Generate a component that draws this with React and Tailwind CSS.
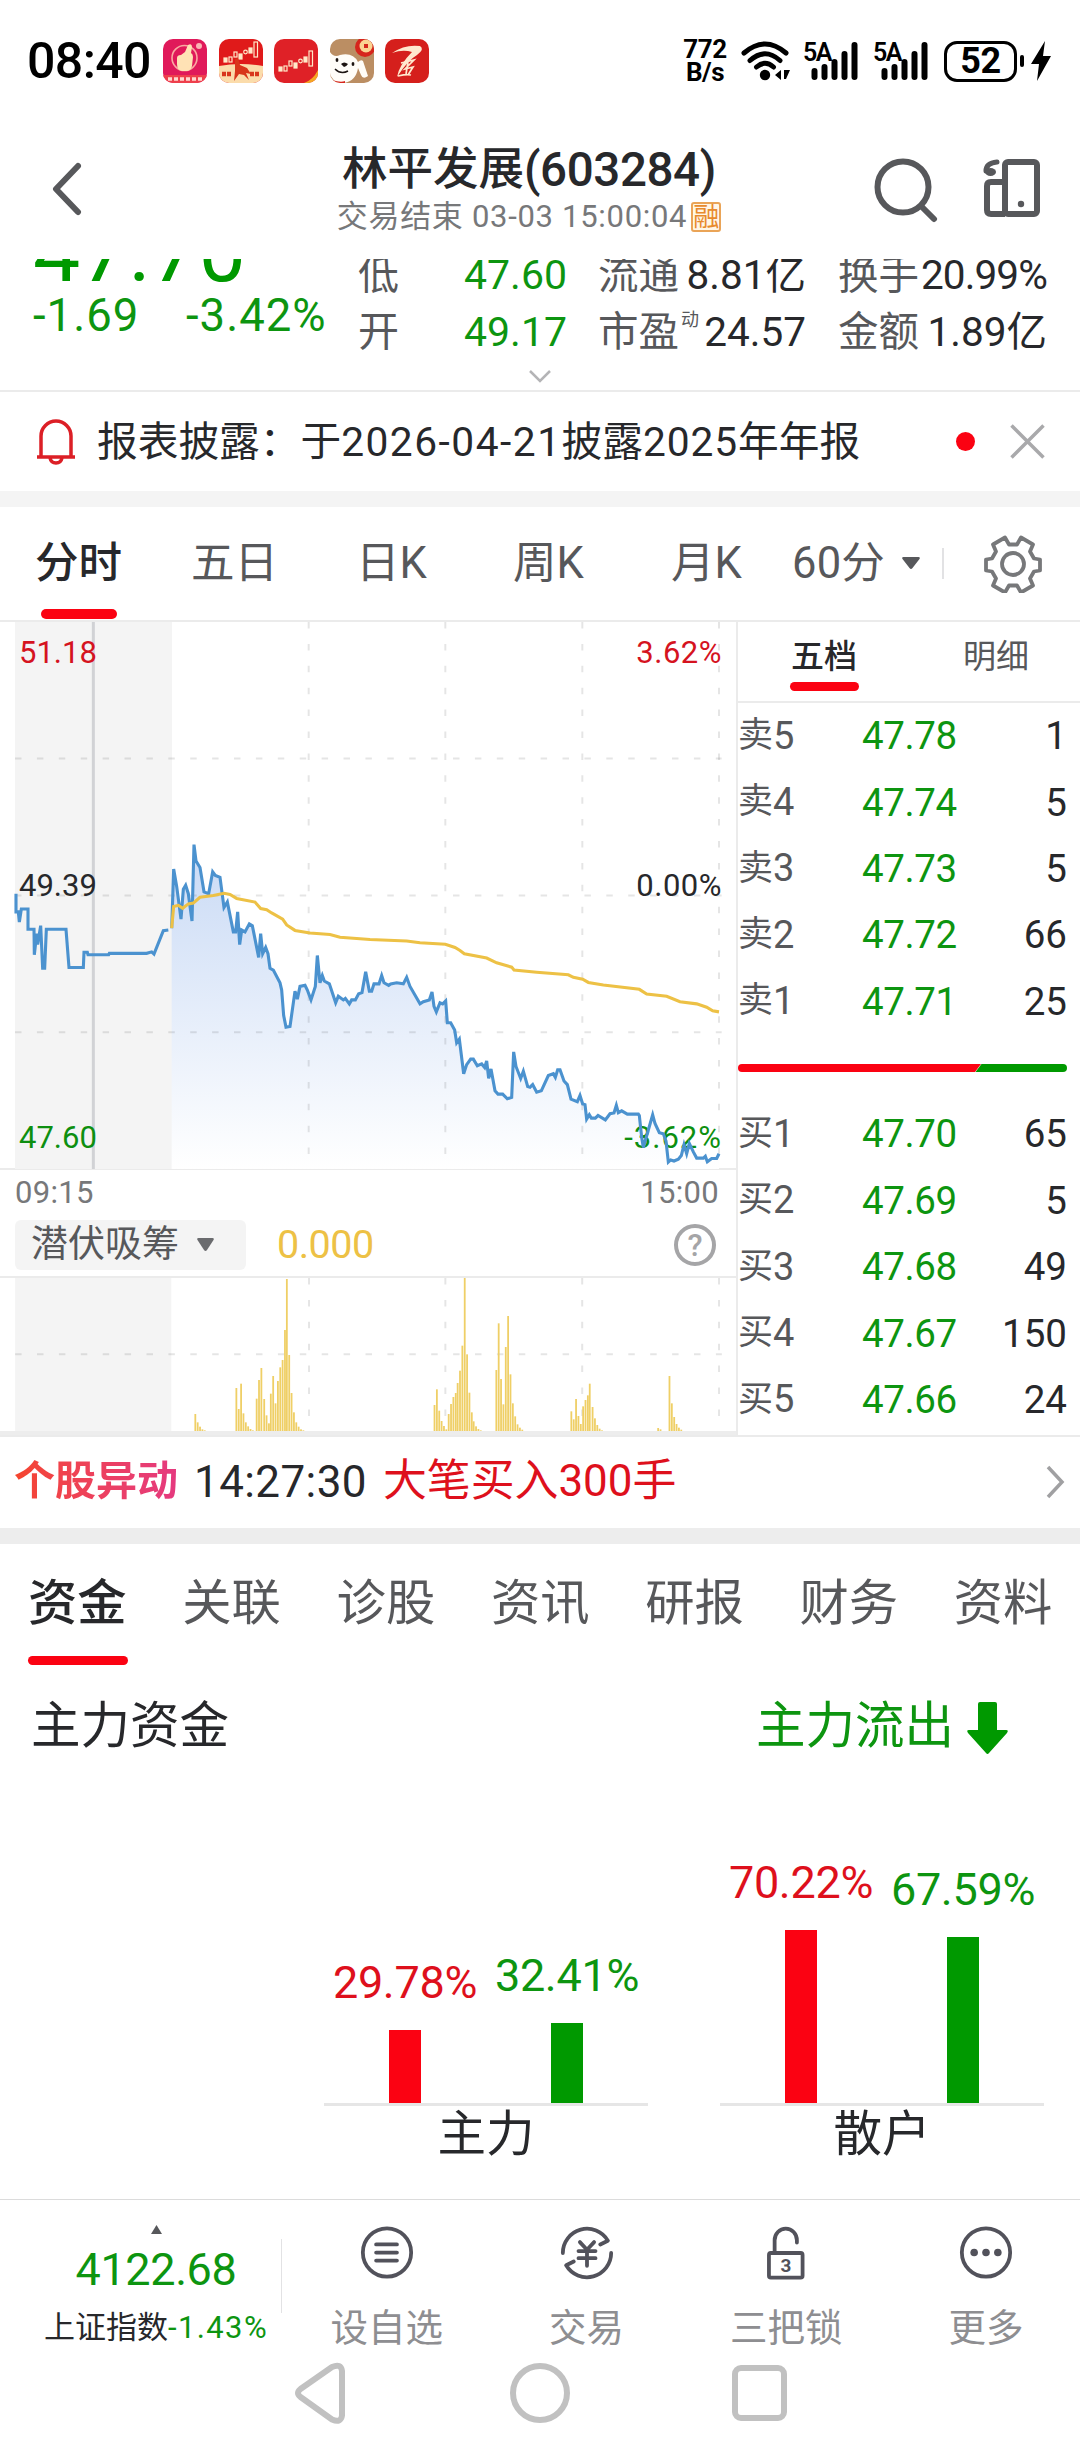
const quoteRows = [
  {
    low: { label: "低", value: "47.60" },
    mid: { label: "流通", value: "8.81亿" },
    right: { label: "换手", value: "20.99%", tight: true },
  },
  {
    low: { label: "开", value: "49.17" },
    mid: { label: "市盈", sup: "动", value: "24.57" },
    right: { label: "金额", value: "1.89亿" },
  },
];

const sellOrders = [
  ["卖5", "47.78", "1"],
  ["卖4", "47.74", "5"],
  ["卖3", "47.73", "5"],
  ["卖2", "47.72", "66"],
  ["卖1", "47.71", "25"],
];

const buyOrders = [
  ["买1", "47.70", "65"],
  ["买2", "47.69", "5"],
  ["买3", "47.68", "49"],
  ["买4", "47.67", "150"],
  ["买5", "47.66", "24"],
];

const infoTabs = ["资金", "关联", "诊股", "资讯", "研报", "财务", "资料"];

const fundGroups = [
  { name: "主力", inflow: 29.78, outflow: 32.41 },
  { name: "散户", inflow: 70.22, outflow: 67.59 },
];

// call auction segment, before 09:30
const auctionLine =
  "48,780 48,830 55,830 58,858 64,822 84,822 84,878 102,878 103,948 110,890 113,920 122,868 128,985 134,985 139,878 198,878 207,983 250,983 252,941 262,941 264,948 326,948 328,944 440,944 455,940 462,946 490,882 505,880";

const priceLine =
  "515,875 521,712 530,760 543,850 550,768 557,757 565,780 576,855 582,645 588,690 600,708 612,775 626,780 638,720 646,730 660,735 672,818 682,803 700,885 707,885 713,830 719,920 725,880 735,885 748,863 757,868 776,955 782,890 788,945 797,928 804,945 810,985 820,990 840,1025 845,1045 851,1115 858,1147 870,1145 885,1048 892,1070 900,1035 915,1032 922,1045 933,1072 946,1035 952,950 960,1025 967,1005 973,1020 988,1028 1007,1080 1015,1062 1030,1072 1036,1068 1048,1083 1055,1072 1066,1072 1076,1055 1086,1052 1097,995 1108,1048 " +
  "1115,1048 1122,1028 1137,1028 1145,1005 1152,1025 1166,1032 1172,1028 1190,1025 1210,1028 1220,1010 1230,1035 1260,1083 1270,1077 1288,1072 1296,1050 1302,1090 1309,1105 1320,1080 1328,1083 1337,1075 1342,1135 1352,1135 1364,1155 1370,1190 1378,1180 1391,1275 1400,1250 1412,1235 1420,1235 1432,1253 1445,1248 1454,1258 1460,1240 1466,1288 1473,1262 1485,1322 1494,1331 1508,1331 1522,1344 1535,1340 1541,1215 1548,1255 1562,1288 1570,1268 1583,1310 1590,1312 1598,1305 1610,1326 1624,1322 1645,1280 1660,1275 1666,1285 1673,1264 1680,1264 1692,1295 1702,1305 1713,1345 1732,1352 1740,1335 1748,1358 1755,1360 1760,1400 1768,1388 1774,1397 1786,1397 1794,1390 1816,1402 1830,1385 1842,1383 1849,1362 1855,1382 1865,1377 1882,1386 1915,1386 1918,1390 1925,1450 1930,1478 1958,1388 1965,1412 1978,1437 1990,1440 1998,1460 2005,1518 2012,1512 2022,1515 2035,1510 2044,1500 2052,1470 2060,1495 2068,1467 2080,1490 2090,1507 2110,1507 2116,1502 2122,1517 2135,1508 2150,1508 2157,1495";

const averageLine =
  "515,875 521,815 535,812 548,820 565,808 580,806 600,790 640,785 672,779 690,782 710,793 765,803 782,821 800,824 815,833 848,850 860,866 885,881 930,888 990,892 1020,900 1110,906 1220,910 1260,915 1336,919 1365,928 1380,936 1393,945 1460,957 1490,970 1535,982 1542,990 1610,996 1705,1003 1720,1010 1748,1015 1765,1024 1810,1031 1918,1043 1940,1056 2000,1062 2040,1077 2090,1083 2120,1092 2138,1102 2157,1105";

// [x, top] pairs, base line is 813
const volumeBars = [
  [414, 762], [419, 787], [424, 800], [429, 808], [434, 811],
  [501, 684], [506, 747], [511, 671], [516, 760], [521, 787], [526, 799], [531, 807], [536, 811],
  [544, 716], [549, 660], [554, 624], [560, 717], [565, 766], [570, 790], [574, 701], [579, 648], [584, 730],
  [589, 663], [594, 622], [599, 600], [604, 510], [608, 357], [613, 585], [618, 699], [623, 757], [628, 787],
  [633, 800], [638, 808], [643, 811],
  [921, 735], [926, 688], [931, 752], [936, 783], [941, 798], [946, 808], [951, 762], [956, 732], [961, 711],
  [966, 699], [970, 669], [975, 632], [980, 557], [985, 354], [990, 583], [995, 698], [1000, 757], [1004, 784],
  [1009, 799], [1014, 807], [1019, 811],
  [1052, 630], [1057, 490], [1062, 657], [1067, 733], [1072, 561], [1077, 468], [1082, 643], [1087, 730],
  [1092, 769], [1097, 793], [1102, 803], [1107, 809],
  [1211, 754], [1216, 778], [1221, 717], [1226, 768], [1231, 792], [1236, 739], [1241, 720], [1246, 706],
  [1250, 671], [1256, 741], [1261, 775], [1266, 795], [1271, 806], [1276, 811],
  [1395, 804], [1400, 808], [1419, 648], [1424, 730], [1429, 771], [1434, 792], [1439, 803], [1444, 809],
];

const candles = (
  <g stroke="#ffe9c9" strokeWidth="1.2" fill="none">
    <rect x="5" y="28" width="3" height="4" fill="#ffe9c9" />
    <rect x="10" y="27" width="3" height="5" />
    <rect x="15" y="22" width="3" height="5" />
    <rect x="20" y="24" width="3" height="5" fill="#ffe9c9" />
    <circle cx="26.5" cy="22" r="1.8" />
    <rect x="30" y="18" width="3" height="5" fill="#ffe9c9" />
    <rect x="35" y="12" width="3.5" height="15" />
  </g>
);

const AppIcons = () => (
  <div className="flex gap-[11.5px]">
    <svg className="size-11 rounded-[10px]" viewBox="0 0 44 44">
      <rect width="44" height="44" fill="#e0195a" />
      <path d="M0 36h44v8H0z" fill="#ee3f4c" />
      <circle cx="21.5" cy="19" r="12.5" fill="none" stroke="#f9a9a0" strokeWidth="1.6" />
      <path d="M14 19q0-3 4-3l4-3 3-7q4-2 4 2l-1 6q2 1 2 4l-1 9q-1 5-6 5h-4q-5-1-5-7z" fill="#ffe2b5" />
      <circle cx="36" cy="7" r="3" fill="#f9b4b4" />
      <path d="M5 40h34" stroke="#ffd9cf" strokeWidth="3.5" strokeDasharray="4 2" />
    </svg>
    <svg className="size-11 rounded-[10px]" viewBox="0 0 44 44">
      <rect width="44" height="44" fill="#e01a1a" />
      <path d="M0 27q22-4 44 0v17H0z" fill="#fbdcab" />
      <g transform="translate(0 -9)">{candles}</g>
      <path d="M16 20l3-1 2 7 7 3 4 6-5-1 3 7-5-5-5-1-5 7 1-10z" fill="#d8361c" />
      <path d="M3 35h10M31 35h10" stroke="#d8361c" strokeWidth="4.5" strokeDasharray="4 1" />
    </svg>
    <svg className="size-11 rounded-[10px]" viewBox="0 0 44 44">
      <rect width="44" height="44" fill="#df2127" />
      {candles}
      <path d="M44 31v13H30q9-3 14-13z" fill="#f5a623" />
    </svg>
    <svg className="size-11 rounded-[10px]" viewBox="0 0 44 44">
      <rect width="44" height="44" fill="#bb8e63" />
      <circle cx="35" cy="8" r="10" fill="#d6261d" />
      <circle cx="36" cy="7" r="6.5" fill="#fbd493" />
      <path d="M34 5h4v4h-4z" fill="#d6261d" />
      <path d="M0 13q4 6 10 3 13-3 18 7 3-3 5-1l5 15q-5 4-7-1l-3-7q-2 13-14 15H6L0 36z" fill="#fffdf8" />
      <path d="M11 25q3-3 7 0-2 3-4 3z" fill="#1d1512" />
      <ellipse cx="7" cy="21" rx="1.4" ry="2" fill="#1d1512" />
      <ellipse cx="23" cy="25" rx="1.4" ry="2" fill="#1d1512" />
      <path d="M5 30q6 6 13 2" stroke="#1d1512" strokeWidth="1.5" fill="none" />
      <path d="M2 41q9 3 13 1v2H2z" fill="#d6261d" />
    </svg>
    <svg className="size-11 rounded-[10px]" viewBox="0 0 44 44">
      <rect width="44" height="44" fill="#d51f1c" />
      <path d="M7 14Q20 5 35 7q5 3-3 9-9 5-20 22 2-12 15-25-9-3-20 1z" fill="#ffe9cf" />
      <path d="M16 24l13-3-9 9 8-2-5 8M13 37q9-2 13-1M23 23l-2 12" stroke="#ffe9cf" strokeWidth="1.7" fill="none" />
    </svg>
  </div>
);

const Signal = () => (
  <div className="relative h-[38px] w-[56px]">
    <span className="absolute -top-[3px] left-0 text-[25px] leading-[28px] font-semibold tracking-[-1.5px]">5A</span>
    <svg className="absolute right-0 bottom-0" width="48" height="38" viewBox="0 0 48 38">
      <path d="M3.5 29v6M13.5 25v10M23.5 20v15M33.5 12v23M43.5 3v32" stroke="#000" strokeWidth="6" strokeLinecap="round" />
    </svg>
  </div>
);

const StatusBar = () => (
  <div className="flex h-[122px] items-center pr-[29px] pl-[27px] text-black">
    <div className="w-[136px] text-[50px] leading-none font-medium tracking-[-0.6px]">08:40</div>
    <AppIcons />
    <div className="flex-1" />
    <div className="w-[46px] text-center text-[26px] leading-[23px] font-bold tracking-[-0.5px]">
      <div>772</div>
      <div>B/s</div>
    </div>
    <svg className="ml-[13px]" width="50" height="40" viewBox="0 0 50 40">
      <g fill="none" stroke="#000" strokeWidth="5" strokeLinecap="round">
        <path d="M3 12Q24-6 45 12" />
        <path d="M9 19.5Q24 6 39 19.5" />
        <path d="M15.5 26Q24 18.500 32.5 26" />
      </g>
      <circle cx="24" cy="34" r="5.2" />
      <path d="M40 29v10l-6-5zM43 29l6 0-4 9h-2z" />
    </svg>
    <div className="ml-[12px] flex gap-[14px]">
      <Signal />
      <Signal />
    </div>
    <div className="ml-[15px] flex h-[41px] w-[73px] items-center justify-center rounded-[13px] border-[3px] border-black text-[36px] leading-none font-bold tracking-[-0.5px]">
      52
    </div>
    <div className="ml-[3px] h-[12px] w-[4px] rounded-full bg-black" />
    <svg className="ml-[7px]" width="20" height="40" viewBox="0 0 20 40">
      <path d="M14 0L0 23h8l-2 17L20 15h-8z" />
    </svg>
  </div>
);

const Header = () => (
  <div className="flex h-[137px] items-start justify-between pr-[39px] pl-[52px]">
    <svg className="mt-[40px]" width="30" height="54" viewBox="0 0 30 54">
      <path d="M26 4L4 27l22 23" fill="none" stroke="#57585b" strokeWidth="6" strokeLinecap="round" strokeLinejoin="round" />
    </svg>
    <div className="mt-[21px] ml-[103px] flex flex-col items-center">
      <div className="flex h-[54px] items-center font-medium whitespace-nowrap text-[#27282b]">
        <span className="text-[45.5px] leading-[54px]">林平发展</span>
        <span className="text-[47.5px] leading-[54px] tracking-[-0.4px]">(603284)</span>
      </div>
      <div className="mt-[2px] flex h-[36px] items-center gap-[4px] whitespace-nowrap text-[#77787a]">
        <span className="text-[31px] leading-[36px] tracking-[0.7px]">交易结束 03-03 15:00:04</span>
        <span className="flex size-[30px] items-center justify-center rounded-[3px] border-2 border-[#eaa457] bg-[#fff6e6] text-[26px] leading-none text-[#e88a2c]">
          融
        </span>
      </div>
    </div>
    <div className="flex items-start gap-[44px] pt-[35px]">
      <svg width="66" height="66" viewBox="0 0 66 66" fill="none" stroke="#57585b" strokeWidth="6">
        <circle cx="30" cy="30" r="25.5" />
        <path d="M48 49l13 13" strokeLinecap="round" />
      </svg>
      <svg className="mt-px" width="58" height="60" viewBox="0 0 58 60" fill="none" stroke="#57585b" strokeWidth="6">
        <rect x="22" y="4" width="32" height="52" rx="3" />
        <path d="M22 24H8q-4 0-4 4v24q0 4 4 4h14" />
        <circle cx="38" cy="46" r="3.2" fill="#57585b" stroke="none" />
        <path d="M14 4Q3 5 3 13" strokeWidth="5" strokeLinecap="round" />
        <ellipse cx="7.5" cy="14" rx="5.5" ry="4" fill="#57585b" stroke="none" />
      </svg>
    </div>
  </div>
);

const Quote = () => (
  <div className="flex h-[133px] flex-col overflow-hidden border-b-2 border-[#ebebeb]">
    <div className="flex h-[109px] pr-[33px] pl-[33px] text-[41px]">
      <div className="w-[326px] whitespace-nowrap text-[#0d9510]">
        <div className="-mt-[47px] h-[78px] text-[84px] leading-[82px] tracking-[0.5px] text-[#009900]">47.70</div>
        <div className="mt-[1px] flex text-[45.5px] leading-[50px] tracking-[1px]">
          <div className="w-[153px]">-1.69</div>
          <div>-3.42%</div>
        </div>
      </div>
      <div className="-mt-[12px] flex flex-1 flex-col">
        {quoteRows.map((row) => (
          <div key={row.low.label} className="flex h-[57px] items-center whitespace-nowrap">
            <div className="flex w-[209px] justify-between">
              <span className="text-[#57585b]">{row.low.label}</span>
              <span className="text-[#0d9510]">{row.low.value}</span>
            </div>
            <div className="ml-[31px] flex w-[208px] justify-between text-[40.5px]">
              <span className="flex text-[#57585b]">
                {row.mid.label}
                {row.mid.sup && <span className="ml-[2px] text-[18px] leading-[36px]">{row.mid.sup}</span>}
              </span>
              <span className="text-[#27282b]">{row.mid.value}</span>
            </div>
            <div className="ml-[32px] flex w-[209px] justify-between text-[40.5px]">
              <span className="text-[#57585b]">{row.right.label}</span>
              <span className={row.right.tight ? "tracking-[-0.9px] text-[#27282b]" : "text-[#27282b]"}>{row.right.value}</span>
            </div>
          </div>
        ))}
      </div>
    </div>
    <svg className="mx-auto mt-[2px]" width="22" height="14" viewBox="0 0 22 14">
      <path d="M1 1l10 10L21 1" fill="none" stroke="#b4b4b6" strokeWidth="2.5" />
    </svg>
  </div>
);

const Notice = () => (
  <div className="flex h-[99px] items-center pr-[35px] pl-[36px]">
    <svg width="40" height="46" viewBox="0 0 40 46" fill="none" stroke="#dc1f26" strokeWidth="3.5">
      <path d="M5 38V17a15 15 0 0 1 30 0v21" />
      <path d="M1 38h38M14 39q1 5 6 5t6-5" />
    </svg>
    <div className="ml-[21px] text-[40.7px] leading-[50px] whitespace-nowrap text-[#27282b]">
      报表披露：于<span className="tracking-[1.5px]">2026-04-21</span>披露<span className="tracking-[0.9px]">2025</span>年年报
    </div>
    <div className="ml-auto size-[19px] rounded-full bg-[#fb0212]" />
    <svg className="ml-[35px]" width="35" height="35" viewBox="0 0 35 35">
      <path d="M1.5 1.5l32 32M33.5 1.5l-32 32" stroke="#a9a9ab" strokeWidth="3.5" />
    </svg>
  </div>
);

const ChartTabs = () => (
  <div className="flex h-[115px] items-center border-b-2 border-[#ebebeb] pr-[38px] pl-[35px] text-[43.5px] whitespace-nowrap text-[#57585b]">
    <div className="relative w-[156px] font-medium text-[#27282b]">
      分时
      <div className="absolute top-[78px] left-[6px] h-[10px] w-[76px] rounded-full bg-[#fb0212]" />
    </div>
    <div className="w-[165px]">五日</div>
    <div className="w-[157px]">日K</div>
    <div className="w-[158px]">周K</div>
    <div className="w-[121px]">月K</div>
    <div className="tracking-[0.2px]">60分</div>
    <svg className="ml-[17px]" width="18" height="13" viewBox="0 0 18 13">
      <path d="M1.5 0h15q2 0 1 2l-7 9q-1.500 2-3 0L.5 2q-1-2 1-2z" fill="#57585b" />
    </svg>
    <div className="ml-auto h-[31px] w-[2px] bg-[#e2e2e4]" />
    <svg className="ml-[40px]" width="58" height="58" viewBox="0 0 58 58" fill="none" stroke="#77787a" strokeWidth="3.8" strokeLinejoin="round">
      <path d="M21 2.500l4 7h8l4-7 12 7-3 7 4 7 6 1v11l-6 1-4 7 3 7-12 7-4-7h-8l-4 7-12-7 3-7-4-7-6-1V24.500l6-1 4-7-3-7z" />
      <circle cx="29" cy="29" r="11" />
    </svg>
  </div>
);

const IntradayChart = () => (
  <div className="relative h-[548px] border-b-2 border-[#ebebeb] text-[31px] leading-[32px]">
    <svg className="absolute inset-0" width="736" height="547" viewBox="0 33 2208 1504" preserveAspectRatio="none">
      <defs>
        <linearGradient id="priceFill" gradientUnits="userSpaceOnUse" x1="0" y1="645" x2="0" y2="1537">
          <stop offset="0" stopColor="#c9daf5" />
          <stop offset="1" stopColor="#ffffff" />
        </linearGradient>
      </defs>
      <rect x="45" y="33" width="471" height="1504" fill="#f4f4f4" />
      <polygon points={`${priceLine} 2157,1537 515,1537`} fill="url(#priceFill)" />
      <g stroke="#000" strokeOpacity="0.1" strokeWidth="2" strokeDasharray="6.5 15.4">
        {[408, 785, 1161].map((y) => (
          <path key={y} d={`M45 ${y}H2165`} vectorEffect="non-scaling-stroke" />
        ))}
        {[926, 1336, 1747, 2157].map((x) => (
          <path key={x} d={`M${x} 33V1500`} vectorEffect="non-scaling-stroke" />
        ))}
      </g>
      <path d="M280 33V1537" stroke="#d1d2d5" strokeWidth="3" vectorEffect="non-scaling-stroke" />
    </svg>
    <div className="relative flex h-full flex-col pr-[14px] pl-[19px]">
      <div className="mt-[15px] flex justify-between text-[#d5131f]">
        <span>51.18</span>
        <span className="tracking-[0.5px]">3.62%</span>
      </div>
      <div className="mt-[201px] flex justify-between text-[#27282b]">
        <span>49.39</span>
        <span className="tracking-[0.5px]">0.00%</span>
      </div>
      <div className="mt-[220px] flex justify-between text-[#0d8f10]">
        <span>47.60</span>
        <span className="tracking-[1px]">-3.62%</span>
      </div>
    </div>
    <svg className="absolute inset-0" width="736" height="547" viewBox="0 33 2208 1504" preserveAspectRatio="none">
      <g fill="none" strokeWidth="3.1">
        <polyline points={auctionLine} stroke="#4b92cf" vectorEffect="non-scaling-stroke" />
        <polyline points={priceLine} stroke="#4b92cf" vectorEffect="non-scaling-stroke" />
        <polyline points={averageLine} stroke="#edc145" vectorEffect="non-scaling-stroke" />
      </g>
    </svg>
  </div>
);

const VolumeChart = () => (
  <svg width="736" height="153" viewBox="0 354 1560 459" preserveAspectRatio="none">
    <rect x="32" y="354" width="331" height="459" fill="#f4f4f4" />
    <g stroke="#000" strokeOpacity="0.1" strokeWidth="2" strokeDasharray="6.5 15.4">
      <path d="M32 583H1530" vectorEffect="non-scaling-stroke" />
      {[655, 944, 1234, 1524].map((x) => (
        <path key={x} d={`M${x} 354V780`} vectorEffect="non-scaling-stroke" />
      ))}
    </g>
    {volumeBars.map(([x, top]) => (
      <rect key={x} x={x - 1.9} y={top} width="3.8" height={813 - top} fill="#efcf66" />
    ))}
  </svg>
);

const ChartPanel = () => (
  <div className="flex w-[738px] flex-col border-r-2 border-[#ebebeb]">
    <IntradayChart />
    <div className="flex h-[48px] items-center justify-between pr-[17px] pb-[2px] pl-[15px] text-[31px] tracking-[0.3px] text-[#77787a]">
      <span>09:15</span>
      <span>15:00</span>
    </div>
    <div className="flex h-[60px] items-start border-b-2 border-[#ebebeb] pr-[20px] pl-[15px]">
      <div className="mt-[2px] flex h-[50px] w-[231px] items-center rounded-[6px] bg-[#f4f4f4] pl-[16px] text-[37px] text-[#57585b]">
        潜伏吸筹
        <svg className="ml-[18px]" width="17" height="14" viewBox="0 0 17 14">
          <path d="M1.5 0h14q2 0 1 2l-6.500 10q-1.500 2-3 0L.5 2q-1-2 1-2z" fill="#6a6b6e" />
        </svg>
      </div>
      <div className="ml-[31px] text-[39.5px] leading-[54px] tracking-[-0.5px] text-[#edc145]">0.000</div>
      <div className="mt-[6px] ml-auto flex size-[42px] items-center justify-center rounded-full border-[4px] border-[#a5a5a7] text-[31px] leading-none font-medium text-[#a5a5a7]">
        ?
      </div>
    </div>
    <VolumeChart />
    <div className="h-[4px] bg-[#ededed]" />
  </div>
);

const OrderRow = ({ order: [label, price, amount] }) => (
  <div className="flex h-[66.36px] items-center text-[38.5px] text-[#27282b]">
    <div className="flex w-[124px] items-center text-[#57585b]">
      <span className="text-[35px]">{label[0]}</span>
      <span className="text-[38px]">{label[1]}</span>
    </div>
    <div className="tracking-[-0.4px] text-[#0d9510]">{price}</div>
    <div className="ml-auto">{amount}</div>
  </div>
);

const OrderBook = () => (
  <div className="flex flex-1 flex-col">
    <div className="flex h-[81px] border-b-2 border-[#ebebeb] text-[33px] leading-[70px]">
      <div className="relative ml-[53px] w-[172px] font-medium text-[#27282b]">
        五档
        <div className="absolute top-[60px] left-[-1px] h-[9px] w-[69px] rounded-full bg-[#fb0212]" />
      </div>
      <div className="text-[#57585b]">明细</div>
    </div>
    <div className="pr-[15px]">
      {sellOrders.map((order) => (
        <OrderRow key={order[0]} order={order} />
      ))}
      <div className="flex h-[66.36px] items-center">
        <svg width="329" height="8" viewBox="0 0 329 8">
          <path d="M4 0h239l-6 8H4a4 4 0 0 1 0-8z" fill="#fb0212" />
          <path d="M243.5 0H325a4 4 0 0 1 0 8h-87.500z" fill="#009900" />
        </svg>
      </div>
      {buyOrders.map((order) => (
        <OrderRow key={order[0]} order={order} />
      ))}
    </div>
  </div>
);

const EventRow = () => (
  <div className="flex h-[93px] items-center border-t-2 border-[#ebebeb] pr-[15px] pb-[2px] pl-[14px] text-[43.9px] whitespace-nowrap">
    <span className="bg-gradient-to-r from-[#f5452c] to-[#e5397f] bg-clip-text text-[41px] font-bold text-transparent">个股异动</span>
    <span className="ml-[16px] text-[44px] tracking-[0.4px] text-[#27282b]">14:27:30</span>
    <span className="ml-[16px] text-[#de101c]">大笔买入300手</span>
    <svg className="ml-auto" width="19" height="34" viewBox="0 0 19 34">
      <path d="M2 2l14 15L2 32" fill="none" stroke="#a0a0a2" strokeWidth="3.5" />
    </svg>
  </div>
);

const InfoTabs = () => (
  <div className="flex h-[126px] pt-[22px] pl-[28px] text-[49.3px] leading-[74px] text-[#57585b]">
    {infoTabs.map((tab, i) => (
      <div key={tab} className={i === 0 ? "relative w-[154.3px] shrink-0 font-medium text-[#27282b]" : "w-[154.3px] shrink-0"}>
        {tab}
        {i === 0 && <div className="absolute top-[90px] left-0 h-[9px] w-[100px] rounded-full bg-[#fb0212]" />}
      </div>
    ))}
  </div>
);

const percentToPx = (value) => value * 2.461;

const FundBar = ({ value, up }) => (
  <div className={up ? "flex w-[162px] flex-col items-center text-[#de101c]" : "flex w-[162px] flex-col items-center text-[#0d9510]"}>
    <div className="mb-[21px] text-[45px] leading-[52px] tracking-[-0.3px]">{value}%</div>
    <div className={up ? "w-[32px] bg-[#fb0212]" : "w-[32px] bg-[#009900]"} style={{ height: percentToPx(value) }} />
  </div>
);

const Funds = () => (
  <div className="flex h-[529px] flex-col">
    <div className="flex h-[109px] items-center pt-[4px] pr-[72px] pl-[31px] text-[49.5px] text-[#27282b]">
      <span>主力资金</span>
      <span className="ml-auto text-[#0d9510]">主力流出</span>
      <svg className="mt-[2px] ml-[13px]" width="41" height="52" viewBox="0 0 41 52">
        <path d="M11 2q0-2 2-2h15q2 0 2 2v26h9q3 0 1 3L22 51q-1.500 2-3 0L1 31q-2-3 1-3h9z" fill="#009900" />
      </svg>
    </div>
    <div className="flex flex-1 gap-[72px] pl-[324px]">
      {fundGroups.map((group) => (
        <div key={group.name} className="flex w-[324px] flex-col">
          <div className="flex h-[327px] items-end border-b-[3px] border-[#e6e6e6]">
            <FundBar value={group.inflow} up />
            <FundBar value={group.outflow} />
          </div>
          <div className="text-center text-[48.5px] leading-[57px] text-[#27282b]">{group.name}</div>
        </div>
      ))}
    </div>
  </div>
);

const toolIcons = {
  设自选: (
    <>
      <circle cx="28" cy="28" r="25.5" />
      <path d="M16.5 19.5h22M16.5 28h22M16.5 36.5h22" />
    </>
  ),
  交易: (
    <>
      <path d="M2.5 28.5A25.5 25.5 0 0 1 50 15.5l-8 4" />
      <path d="M53.5 28.5A25.5 25.5 0 0 1 6 41.5l8-4" />
      <path d="M20.5 17l7.500 8 7.500-8M19 26.5h18M19 34h18M28 25v17" />
    </>
  ),
  三把锁: (
    <>
      <rect x="10" y="28.5" width="35.5" height="26" rx="2" />
      <path d="M16 28V15a11.5 12 0 0 1 23.500 0v2.500" />
      <text x="28" y="48.5" textAnchor="middle" fontSize="20" fontWeight="bold" fill="#52525b" stroke="none">3</text>
    </>
  ),
  更多: (
    <>
      <circle cx="28" cy="28" r="25.5" />
      <g fill="#52525b" stroke="none">
        <circle cx="15.5" cy="28" r="4" />
        <circle cx="28" cy="28" r="4" />
        <circle cx="40.5" cy="28" r="4" />
      </g>
    </>
  ),
};

const Toolbar = () => (
  <div className="flex h-[152px] border-t border-[#dcdcdc]">
    <div className="flex w-[281px] shrink-0 flex-col items-center pl-[31px] whitespace-nowrap">
      <svg className="mt-[25px]" width="11" height="9" viewBox="0 0 11 9">
        <path d="M5.5 0L11 9H0z" fill="#57585b" />
      </svg>
      <div className="mt-[12px] text-[45px] leading-[48px] tracking-[-0.4px] text-[#0d9510]">4122.68</div>
      <div className="mt-[14px] text-[31px] leading-[40px] text-[#27282b]">
        上证指数<span className="tracking-[1.4px] text-[#0d9510]">-1.43%</span>
      </div>
    </div>
    <div className="mt-[39px] h-[74px] w-px shrink-0 bg-[#e2e2e4]" />
    <div className="flex pl-[5px]">
      {Object.entries(toolIcons).map(([name, icon]) => (
        <div key={name} className="flex w-[199.7px] shrink-0 flex-col items-center">
          <svg className="mt-[26px]" width="56" height="57" viewBox="0 0 56 57" fill="none" stroke="#52525b" strokeWidth="4" strokeLinecap="round" strokeLinejoin="round">
            {icon}
          </svg>
          <div className="mt-[25px] text-[37.5px] leading-[46px] text-[#8e8e91]">{name}</div>
        </div>
      ))}
    </div>
  </div>
);

const NavBar = () => (
  <div className="flex flex-1 items-start pt-[11px] pl-[294px]">
    <svg width="500" height="62" viewBox="0 0 500 62" fill="none" stroke="#c1c1c1" strokeWidth="6" strokeLinejoin="round">
      <path d="M38 5L6.5 27q-5 4 0 8L38 57.5q9 4 10-4V9q-1-8-10-4z" />
      <circle cx="246" cy="31" r="27" />
      <rect x="441" y="6" width="49" height="50" rx="6" />
    </svg>
  </div>
);

const App = () => (
  <div className="flex h-[2440px] w-[1080px] flex-col overflow-hidden bg-white font-['Roboto','Noto_Sans_CJK_SC',sans-serif]">
    <StatusBar />
    <Header />
    <Quote />
    <Notice />
    <div className="h-[16px] bg-[#f4f4f4]" />
    <ChartTabs />
    <div className="flex h-[813px]">
      <ChartPanel />
      <OrderBook />
    </div>
    <EventRow />
    <div className="h-[16px] bg-[#ededed]" />
    <InfoTabs />
    <Funds />
    <Toolbar />
    <NavBar />
  </div>
);

export default App;
